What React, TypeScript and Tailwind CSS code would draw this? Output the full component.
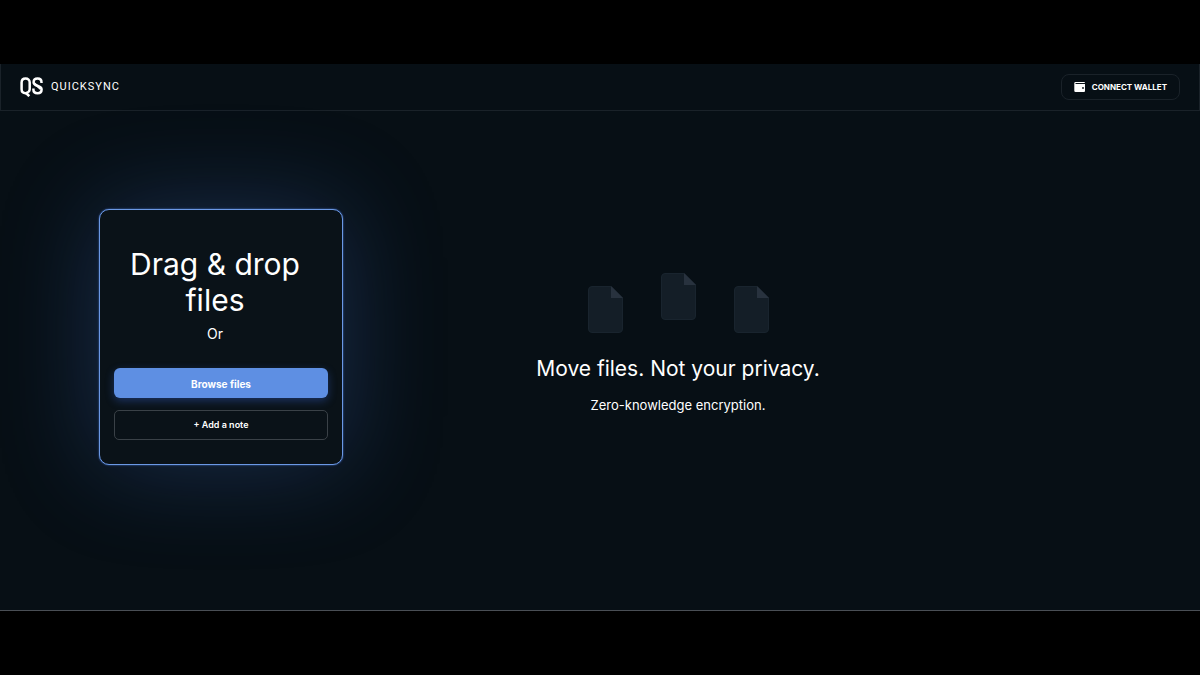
interface FileIconProps {
  raised?: boolean;
}

const FileIcon = ({ raised }: FileIconProps) => (
  <svg viewBox="0 0 35 47" className={`w-[35px] h-[47px]${raised ? " mb-[13px]" : ""}`} aria-hidden="true">
    <path d="M4 .5H23L34.500 12V43a3.500 3.500 0 0 1-3.500 3.500H4A3.500 3.500 0 0 1 .5 43V4A3.500 3.500 0 0 1 4 .5z" fill="#141e27" stroke="#19242e" />
    <path d="M23 0 35 12H23z" fill="#28323e" />
  </svg>
);

const Logo = () => (
  <svg viewBox="0 0 24 20" className="w-6 h-5" fill="none" stroke="white" strokeWidth="2.500" aria-hidden="true">
    <path d="M8.500 14.500C7.800 15.800 6.800 16.200 5.600 16.200 3.200 16.200 1.600 14.700 1.600 12.300V5.500C1.600 3.100 3.200 1.600 5.600 1.600S9.700 3.100 9.700 5.500V12.300C9.700 13.200 9.300 14.200 8.500 14.800" />
    <path d="M5.500 15.500 9.300 19.200" />
    <path d="M21.500 6V5.400C21.500 3 20 1.600 17.600 1.600S13.600 3 13.600 5.200C13.600 7.200 14.800 8 17.400 8.800S21.600 10.500 21.600 12.500C21.600 14.800 20 16.200 17.600 16.200S13.400 14.800 13.400 12.500V11.500" />
    <path d="M14.500 6.500 20.500 12" strokeWidth="2" />
  </svg>
);

const WalletIcon = () => (
  <svg viewBox="0 0 12 10" className="w-3 h-[10px]" aria-hidden="true">
    <path d="M1.500 0H10a1 1 0 0 1 1 1H1.500V2H11V9a1 1 0 0 1-1 1H1.500A1.300 1.300 0 0 1 .3 8.700V1.300A1.300 1.300 0 0 1 1.500 0z" fill="white" />
    <circle cx="9" cy="6" r="0.900" fill="#081017" />
  </svg>
);

export default function App() {
  return (
    <div className="flex min-h-screen flex-col bg-black py-16 font-['Inter',sans-serif] text-white">
      <div className="flex flex-1 flex-col border-b border-[#4a4f55] bg-[#070f15]">
        <header className="flex h-[47px] items-center justify-between border border-t-0 border-[#1a2229] px-[19px]">
          <a href="/" className="flex items-center gap-[7px]">
            <Logo />
            <span className="font-['Roboto',sans-serif] text-[11px] tracking-[1px]">QUICKSYNC</span>
          </a>
          <button type="button" className="flex h-[26px] items-center gap-[6px] rounded-lg border border-[#1a2229] px-3 text-[8px] font-bold">
            <WalletIcon />
            CONNECT WALLET
          </button>
        </header>

        <main className="grid flex-1 grid-cols-[442fr_472fr_286fr] items-center pb-12">
          {/* drop zone */}
          <section className="w-[244px] justify-self-center rounded-[10px] border border-[#6b98e4] bg-[#0a1218] px-[14px] pt-9 pb-6 text-center shadow-[0_0_2px_rgba(75,125,225,0.9),0_0_100px_rgba(75,125,225,0.27)]">
            <div className="pr-3">
              <h1 className="text-3xl/9">Drag &amp; drop files</h1>
              <p className="mt-1 text-sm/6">Or</p>
            </div>
            <button type="button" className="mt-[22px] h-[30px] w-full rounded-md bg-[#5e8fe3] pt-1 text-[10px] font-bold shadow-[0_3px_8px_rgba(60,110,230,0.35)]">
              Browse files
            </button>
            <button type="button" className="mt-3 h-[30px] w-full rounded-[5px] border border-[#3a4147] text-[9px] font-semibold">
              + Add a note
            </button>
          </section>

          <section className="flex flex-col items-center pt-4 text-center">
            <div className="flex items-end gap-[38px]">
              <FileIcon />
              <FileIcon raised />
              <FileIcon />
            </div>
            <h2 className="mt-5 text-[21px]/8">Move files. Not your privacy.</h2>
            <p className="mt-2 text-[13px]/6">Zero-knowledge encryption.</p>
          </section>
        </main>
      </div>
    </div>
  );
}
